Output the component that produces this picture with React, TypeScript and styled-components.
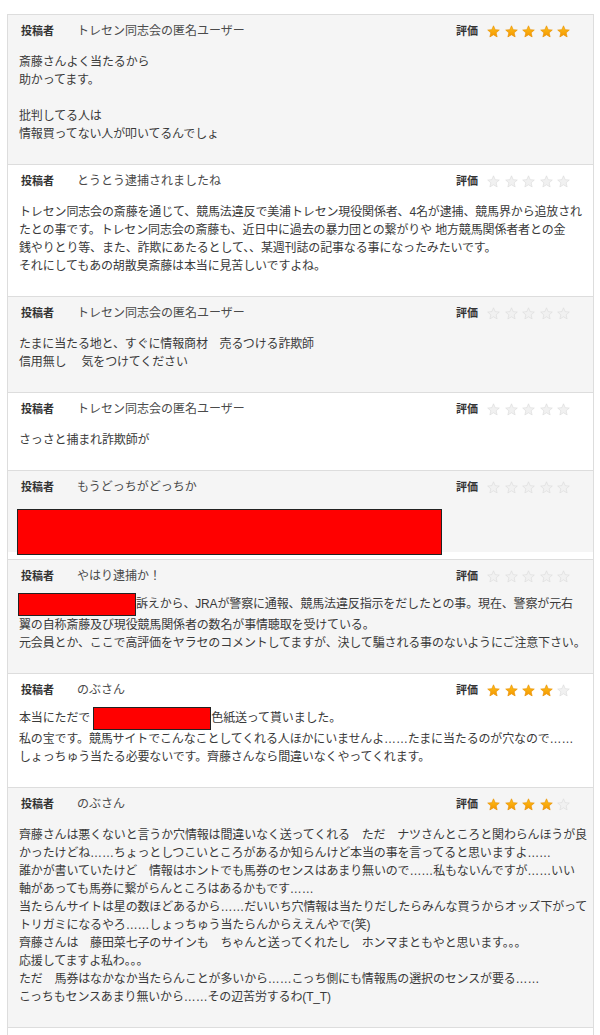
import React from "react";
import styled, { createGlobalStyle, css } from "styled-components";

const GlobalStyle = createGlobalStyle`
  html, body {
    margin: 0;
    padding: 0;
    background: #ffffff;
  }
  body {
    font-family: "Liberation Sans", "Noto Sans CJK JP", sans-serif;
    color: #333;
  }
`;

const Page = styled.div`
  padding: 14px 6px 0 7px;
`;

const List = styled.div`
  width: 585px;
  border: 1px solid #dddddd;
  border-bottom: none;
  padding-bottom: 20px;
`;

const Item = styled.div<{ $gray?: boolean; $tight?: boolean; $gap?: number }>`
  border-bottom: 1px solid #dddddd;
  padding: 9px 23px ${(p) => (p.$tight ? 4 : 21)}px 11px;
  background: ${(p) => (p.$gray ? "#f5f5f5" : "#ffffff")};
  ${(p) =>
    p.$gray &&
    p.$gap &&
    css`
      background: linear-gradient(#f5f5f5, #f5f5f5) top left / 100%
          calc(100% - ${p.$gap}px) no-repeat,
        #ffffff;
    `}
`;

const Header = styled.div`
  display: flex;
  align-items: center;
  height: 14px;
  padding-left: 2px;
`;

const Label = styled.span`
  font-size: 11px;
  font-weight: bold;
  color: #333;
  line-height: 14px;
`;

const Poster = styled(Label)`
  width: 56px;
  flex: none;
`;

const Name = styled.span`
  flex: 1;
  font-size: 12px;
  color: #4a4a4a;
  line-height: 14px;
  white-space: nowrap;
`;

const Rating = styled.div`
  display: flex;
  align-items: center;
  gap: 9px;
`;

const Stars = styled.div`
  display: flex;
  align-items: center;
  gap: 4.5px;
`;

const Body = styled.div<{ $top?: number }>`
  margin-top: ${(p) => p.$top ?? 15}px;
  font-size: 12px;
  line-height: 18px;
  letter-spacing: -0.15px;
  color: #3a3a3a;
  white-space: nowrap;
`;

const Redact = styled.span<{ $w: number; $h: number; $shift?: number }>`
  display: inline-block;
  width: ${(p) => p.$w}px;
  height: ${(p) => p.$h}px;
  margin-left: ${(p) => p.$shift ?? 0}px;
  background: #ff0000;
  border: 1px solid #222;
  box-sizing: border-box;
  vertical-align: middle;
`;

const RedactBlock = styled(Redact)`
  display: block;
`;

const Star: React.FC<{ on: boolean }> = ({ on }) => (
  <svg width="13" height="13" viewBox="0 0 24 24" aria-hidden="true">
    <defs>
      <linearGradient id="sg" x1="0" y1="0" x2="0" y2="1">
        <stop offset="0" stopColor="#ffc11a" />
        <stop offset="1" stopColor="#f39500" />
      </linearGradient>
    </defs>
    <path
      d="M12 1.5l3.1 7.1 7.6.7-5.8 5.1 1.8 7.6L12 18l-6.7 4 1.8-7.6-5.8-5.1 7.6-.7z"
      fill={on ? "url(#sg)" : "#f1f1f1"}
      stroke={on ? "#e89000" : "#dcdcdc"}
      strokeWidth="1.2"
      strokeLinejoin="round"
    />
  </svg>
);

const Head: React.FC<{ name: string; stars: number }> = ({ name, stars }) => (
  <Header>
    <Poster>投稿者</Poster>
    <Name>{name}</Name>
    <Rating>
      <Label>評価</Label>
      <Stars>
        {[0, 1, 2, 3, 4].map((i) => (
          <Star key={i} on={i < stars} />
        ))}
      </Stars>
    </Rating>
  </Header>
);

export default function App() {
  return (
    <>
      <GlobalStyle />
      <Page>
        <List>
          <Item $gray>
            <Head name="トレセン同志会の匿名ユーザー" stars={5} />
            <Body>
              斎藤さんよく当たるから
              <br />
              助かってます。
              <br />
              <br />
              批判してる人は
              <br />
              情報買ってない人が叩いてるんでしょ
            </Body>
          </Item>

          <Item>
            <Head name="とうとう逮捕されましたね" stars={0} />
            <Body>
              トレセン同志会の斎藤を通じて、競馬法違反で美浦トレセン現役関係者、4名が逮捕、競馬界から追放され
              <br />
              たとの事です。トレセン同志会の斎藤も、近日中に過去の暴力団との繋がりや 地方競馬関係者者との金
              <br />
              銭やりとり等、また、詐欺にあたるとして、、某週刊誌の記事なる事になったみたいです。
              <br />
              それにしてもあの胡散臭斎藤は本当に見苦しいですよね。
            </Body>
          </Item>

          <Item $gray>
            <Head name="トレセン同志会の匿名ユーザー" stars={0} />
            <Body>
              たまに当たる地と、すぐに情報商材　売るつける詐欺師
              <br />
              信用無し　 気をつけてください
            </Body>
          </Item>

          <Item>
            <Head name="トレセン同志会の匿名ユーザー" stars={0} />
            <Body>さっさと捕まれ詐欺師が</Body>
          </Item>

          <Item $gray $tight $gap={7}>
            <Head name="もうどっちがどっちか" stars={0} />
            <Body>
              <RedactBlock $w={425} $h={46} $shift={-2} />
            </Body>
          </Item>

          <Item $gray>
            <Head name="やはり逮捕か！" stars={0} />
            <Body $top={10}>
              <Redact $w={118} $h={23} $shift={-1} />
              訴えから、JRAが警察に通報、競馬法違反指示をだしたとの事。現在、警察が元右
              <br />
              翼の自称斎藤及び現役競馬関係者の数名が事情聴取を受けている。
              <br />
              元会員とか、ここで高評価をヤラセのコメントしてますが、決して騙される事のないようにご注意下さい。
            </Body>
          </Item>

          <Item>
            <Head name="のぶさん" stars={4} />
            <Body $top={10}>
              本当にただで <Redact $w={118} $h={23} />
              色紙送って貰いました。
              <br />
              私の宝です。競馬サイトでこんなことしてくれる人ほかにいませんよ……たまに当たるのが穴なので……
              <br />
              しょっちゅう当たる必要ないです。齊藤さんなら間違いなくやってくれます。
            </Body>
          </Item>

          <Item $gray>
            <Head name="のぶさん" stars={4} />
            <Body>
              齊藤さんは悪くないと言うか穴情報は間違いなく送ってくれる　ただ　ナツさんところと関わらんほうが良
              <br />
              かったけどね……ちょっとしつこいところがあるか知らんけど本当の事を言ってると思いますよ……
              <br />
              誰かが書いていたけど　情報はホントでも馬券のセンスはあまり無いので……私もないんですが……いい
              <br />
              軸があっても馬券に繋がらんところはあるかもです……
              <br />
              当たらんサイトは星の数ほどあるから……だいいち穴情報は当たりだしたらみんな買うからオッズ下がって
              <br />
              トリガミになるやろ……しょっちゅう当たらんからええんやで(笑)
              <br />
              齊藤さんは　藤田菜七子のサインも　ちゃんと送ってくれたし　ホンマまともやと思います。。。
              <br />
              応援してますよ私わ。。。
              <br />
              ただ　馬券はなかなか当たらんことが多いから……こっち側にも情報馬の選択のセンスが要る……
              <br />
              こっちもセンスあまり無いから……その辺苦労するわ(T_T)
            </Body>
          </Item>
        </List>
      </Page>
    </>
  );
}
